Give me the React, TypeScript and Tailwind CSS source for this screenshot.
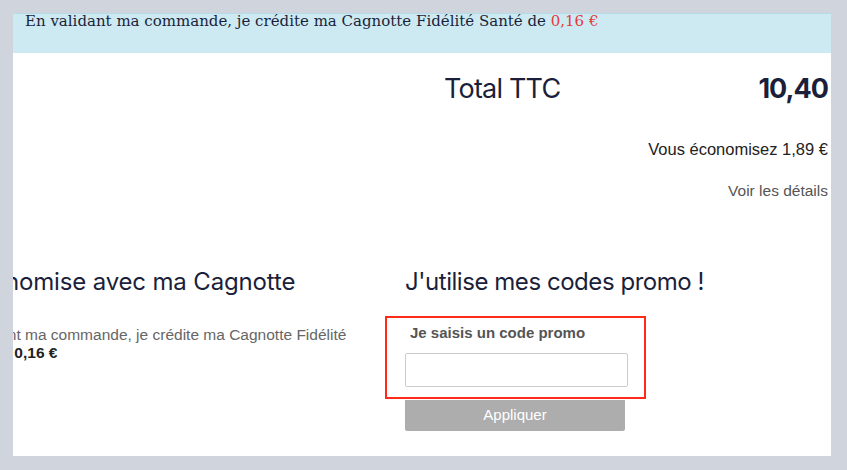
import React from "react";

const sans = "font-['Inter',sans-serif]";
const arial = "font-['Liberation_Sans',Arial,sans-serif]";

function Banner() {
    return (
        <div className="h-[40px] bg-[#cdeaf2] border-t border-[#b3dbe8] shrink-0">
            <p className="pl-[12px] text-[15px] leading-[14px] text-[#1b1f3b] font-['DejaVu_Serif',serif]">
                En validant ma commande, je crédite ma Cagnotte Fidélité Santé de{" "}
                <span className="text-[#e5393a]">0,16 €</span>
            </p>
        </div>
    );
}

function Totals() {
    return (
        <div className="ml-auto w-[384px] mr-[3px] pt-[16px]">
            <div className={`flex items-baseline justify-between text-[#1b1f3b] ${sans}`}>
                <span className="text-[27px] tracking-[-0.8px]">Total TTC</span>
                <span className="text-[27px] font-bold tracking-[-1px]">10,40</span>
            </div>
            <p className={`mt-[27px] text-right text-[16.5px] text-[#222] ${arial}`}>Vous économisez 1,89 €</p>
            <p className={`mt-[18px] text-right text-[15.5px] text-[#555] ${arial}`}>Voir les détails</p>
        </div>
    );
}

function Cagnotte() {
    return (
        <div className="w-[461px] shrink-0">
            <h2 className={`ml-[-1px] text-[24px] text-[#1b1f3b] tracking-[-0.15px] ${sans}`}>J'économise avec ma Cagnotte</h2>
            <p className={`mt-[26px] text-[15.5px] leading-[18px] text-[#666] ${arial}`}>
                En validant ma commande, je crédite ma Cagnotte Fidélité
                <br/>
                Santé de <b className="ml-[4px] text-[#222]">0,16 €</b>
            </p>
        </div>
    );
}

function Promo() {
    return (
        <div className="relative flex-1">
            <h2 className={`text-[24px] text-[#1b1f3b] tracking-[-0.45px] ${sans}`}>J'utilise mes codes promo !</h2>
            <div className="mt-[22px] w-[223px]">
                <p className={`pl-[5px] text-[15px] font-bold text-[#555] ${arial}`}>Je saisis un code promo</p>
                <input
                    type="text"
                    className="mt-[9px] block w-[223px] h-[34px] border border-[#ccc] rounded-[2px] bg-white"
                />
                <button className={`mt-[13px] block w-[220px] h-[31px] bg-[#adadad] rounded-b-[2px] text-white text-[15px] ${arial}`}>
                    Appliquer
                </button>
            </div>
            <div className="absolute left-[-20px] top-[52px] w-[261px] h-[83px] border-2 border-[#ff2a1a] pointer-events-none"/>
        </div>
    );
}

export default function App() {
    return (
        <div className="w-[847px] h-[470px] bg-[#d0d4dc] pl-[13px] pt-[13px]">
            <div className="w-[818px] h-[443px] bg-white overflow-hidden flex flex-col">
                <Banner/>
                <Totals/>
                <div className="flex ml-[-69px] mt-[61px]">
                    <Cagnotte/>
                    <Promo/>
                </div>
            </div>
        </div>
    );
}
